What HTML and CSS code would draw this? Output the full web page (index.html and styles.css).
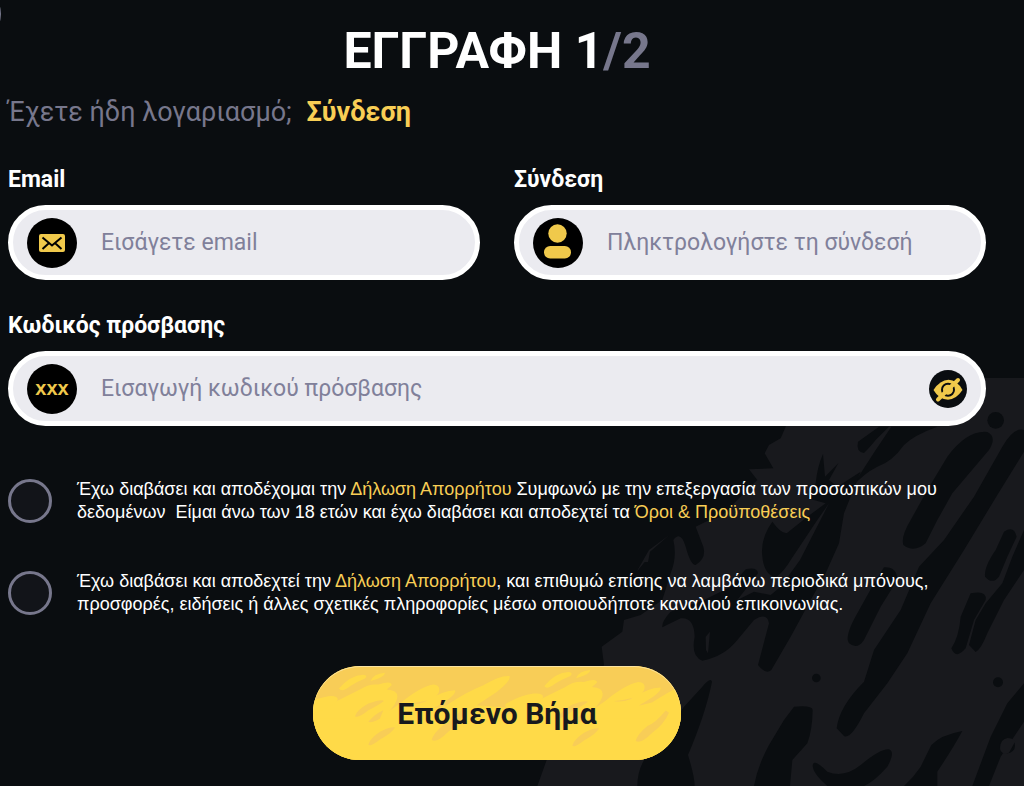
FILE: index.html
```html
<!DOCTYPE html>
<html lang="el">
<head>
    <meta charset="UTF-8">
    <meta name="viewport" content="width=device-width, initial-scale=1.0">
    <title>Εγγραφή</title>
    <link rel="stylesheet" href="styles.css">
</head>
<body>
    <main class="page">
        <svg class="art" viewBox="0 0 1500 1248" aria-hidden="true">
            <path class="art-light" d="M820 24H1500V1248H40L68 1170L160 1000L240 885L233 830L295 785L300 750L350 735L415 690L440 610Q460 560 448 510Q470 480 485 530Q500 585 515 585Q548 565 538 530L515 470L545 455L590 440L640 390L700 330L675 298L748 295L722 250L735 225L770 205L785 170Z"/>
            <path class="art-light" d="M435 496L375 540L338 605L362 576H372L378 545Z"/>
            <g class="art-dark">
                <path d="M1065 170L1002 215Q995 245 1020 249Q1035 235 1055 210L1095 170ZM1102 170L1055 240L1010 310L985 350Q1020 310 1060 290Q1105 275 1140 225Q1170 195 1240 170Z"/>
                <path d="M897 252Q880 290 875 340L850 385L905 400L850 440L790 488Q775 495 745 455Q712 500 714 550Q718 615 755 622Q780 605 800 570L880 450L915 400L828 570L770 650L740 675L690 665L640 690L702 610Q700 590 665 598L620 650L540 690L440 725Q412 755 415 772L470 745Q510 740 512 800Q500 860 535 872Q600 860 640 810L690 750Q730 725 735 760L702 885Q725 915 742 900L800 800L860 690L905 610L945 520L960 430L1010 305L940 350L915 330L943 280L903 320Z"/>
                <path d="M1270 260Q1330 180 1390 186Q1420 200 1395 240L1285 370L1240 450L1205 520Q1170 550 1138 525Q1130 500 1160 450L1210 360Z"/>
                <path d="M1350 380L1435 230Q1470 170 1500 180V245L1420 375L1320 540L1220 700L1150 850L1090 940L1020 1030Q980 1110 960 1098L938 1075Q945 1010 1020 935L1050 840L1130 720L1185 590L1260 510Z"/>
                <path d="M1080 592Q1120 590 1120 630L1070 710L1020 810Q1000 840 975 820Q960 800 1000 730L1050 640Z"/>
                <path d="M1440 485Q1470 465 1478 500L1450 560L1425 620Q1405 645 1383 620Q1380 590 1415 540Z"/>
                <path d="M1500 480L1465 560L1435 640L1385 700L1355 750L1335 825L1355 846Q1370 840 1390 790L1440 690L1500 600Z"/>
                <path d="M1340 670Q1390 660 1385 690L1350 750L1325 835Q1295 870 1282 835Q1305 800 1310 740Z"/>
                <path d="M535 950Q560 920 564 935Q545 1030 492 1155Q512 1220 512 1248H340Q340 1170 410 1110L480 1010Z"/>
                <path d="M810 1010Q865 1005 866 1020Q865 1080 850 1120L805 1170L798 1248H690Q700 1190 735 1125L780 1050Z"/>
                <path d="M866 1185Q870 1165 910 1205Q960 1225 1010 1185Q1070 1135 1095 1138Q1115 1145 1090 1190Q1050 1235 1020 1248H910Q865 1210 866 1185Z"/>
                <path d="M1315 1083Q1290 1130 1240 1205V1248H1140Q1170 1220 1190 1190L1222 1125Q1250 1095 1315 1083Z"/>
                <path d="M1500 940V1055L1430 1160L1395 1248H1345L1400 1100L1450 1000Z"/>
                <circle cx="1415" cy="151" r="25"/>
                <circle cx="877" cy="924" r="13"/>
                <circle cx="1422" cy="937" r="15"/>
                <circle cx="1450" cy="1127" r="23"/>
            </g>
            <path class="art-light" d="M1428 1135Q1428 1108 1450 1104Q1465 1104 1474 1114L1455 1148L1440 1151Q1428 1145 1428 1135ZM545 800L558 785L552 850L546 840Z"/>
        </svg>
        <span class="edge-ring" aria-hidden="true"></span>

        <form class="signup">
            <h1>ΕΓΓΡΑΦΗ 1<span>/2</span></h1>
            <p class="login">Έχετε ήδη λογαριασμό; <a href="#">Σύνδεση</a></p>

            <div class="fields">
                <div class="field">
                    <label for="email">Email</label>
                    <div class="control">
                        <svg class="icon" viewBox="0 0 50 50" aria-hidden="true">
                            <circle cx="25" cy="25" r="25"/>
                            <rect class="gold" x="12" y="16" width="26" height="18" rx="2"/>
                            <path class="line" d="M15.500 19.500L25 27.500L34.500 19.500M15.500 31L21.500 25.500M34.500 31L28.500 25.500"/>
                        </svg>
                        <input type="email" id="email" placeholder="Εισάγετε email">
                    </div>
                </div>
                <div class="field">
                    <label for="login">Σύνδεση</label>
                    <div class="control">
                        <svg class="icon" viewBox="0 0 50 50" aria-hidden="true">
                            <circle cx="25" cy="25" r="25"/>
                            <circle class="gold" cx="24.500" cy="15.500" r="9.200"/>
                            <rect class="gold" x="11" y="28" width="27" height="12.500" rx="6.200"/>
                        </svg>
                        <input type="text" id="login" placeholder="Πληκτρολογήστε τη σύνδεσή">
                    </div>
                </div>
                <div class="field wide">
                    <label for="password">Κωδικός πρόσβασης</label>
                    <div class="control">
                        <span class="icon xxx" aria-hidden="true">xxx</span>
                        <input type="password" id="password" placeholder="Εισαγωγή κωδικού πρόσβασης">
                        <button type="button" class="toggle" aria-label="Εμφάνιση κωδικού">
                            <svg viewBox="0 0 38 38" aria-hidden="true">
                                <path class="gold" d="M4.500 20Q11 10 19.500 9.800Q28 10 33.500 20Q27 29.600 19 29.800Q10 29.500 4.500 20Z"/>
                                <path class="slash" d="M9 29.500L29 10"/>
                                <circle class="ring" cx="19" cy="19.700" r="6"/>
                                <path class="slash" d="M14 24.500L24 14.800"/>
                                <circle class="gold" cx="19" cy="19.700" r="4.500"/>
                            </svg>
                        </button>
                    </div>
                </div>
            </div>

            <div class="consents">
                <div class="consent">
                    <input type="checkbox" id="terms">
                    <label for="terms">Έχω διαβάσει και αποδέχομαι την <a href="#">Δήλωση Απορρήτου</a> Συμφωνώ με την επεξεργασία των προσωπικών μου<br>δεδομένων&nbsp; Είμαι άνω των 18 ετών και έχω διαβάσει και αποδεχτεί τα <a href="#">Όροι &amp; Προϋποθέσεις</a></label>
                </div>
                <div class="consent">
                    <input type="checkbox" id="news">
                    <label for="news">Έχω διαβάσει και αποδεχτεί την <a href="#">Δήλωση Απορρήτου</a>, και επιθυμώ επίσης να λαμβάνω περιοδικά μπόνους,<br>προσφορές, ειδήσεις ή άλλες σχετικές πληροφορίες μέσω οποιουδήποτε καναλιού επικοινωνίας.</label>
                </div>
            </div>

            <button type="submit" class="next">
                <svg viewBox="39 47 1104 283" preserveAspectRatio="none" aria-hidden="true">
                    <defs>
                        <g id="strokes">
                            <path d="M0 205L60 178L180 118Q205 100 235 103Q275 90 275 105L260 118Q300 120 290 150Q280 180 235 205L300 160Q360 110 400 103Q425 105 415 130Q395 155 325 160Q350 165 375 155Q430 120 465 120Q470 130 440 150L400 175L440 165Q500 125 550 105Q600 75 628 77Q635 90 590 125L530 165L616 172V340H0Z"/>
                            <path d="M0 170Q40 145 85 138Q115 135 113 150Q100 170 40 190H0Z"/>
                            <path d="M117 115Q150 75 190 73Q205 75 195 85Q170 95 150 108Q125 128 117 115ZM212 92Q220 70 255 67Q255 80 212 92Z"/>
                        </g>
                        <g id="scratches">
                            <path d="M165 198Q170 180 205 160Q245 145 252 152Q235 165 205 180Q175 205 165 198ZM205 215Q225 190 250 180L240 205Q215 220 205 215ZM205 283Q210 265 240 245Q270 230 285 232Q275 250 240 268Q210 292 205 283ZM395 270Q400 250 430 225Q455 215 485 178L495 185Q480 220 445 245Q410 280 395 270Z"/>
                        </g>
                    </defs>
                    <rect class="btn-top" x="39" y="47" width="1104" height="283"/>
                    <g class="btn-base">
                        <use href="#strokes"/>
                        <use href="#strokes" x="616" y="-8"/>
                        <rect x="39" y="205" width="1104" height="125"/>
                    </g>
                    <g class="btn-top">
                        <use href="#scratches"/>
                        <use href="#scratches" x="612" y="3"/>
                    </g>
                </svg>
                <span>Επόμενο Βήμα</span>
            </button>
        </form>
    </main>
</body>
</html>
```
FILE: styles.css
```css
* {
    margin: 0;
    padding: 0;
    box-sizing: border-box;
}

body {
    background: #0a0d10;
    color: #fff;
    font-family: Roboto, "Liberation Sans", sans-serif;
}

a {
    color: #f8ce55;
    text-decoration: none;
}

.page {
    position: relative;
    min-height: 100vh;
    padding: 20px 38px 26px 8px;
    overflow: hidden;
}

/* Background drawing */
.art {
    position: absolute;
    right: 0;
    bottom: 0;
    width: 500px;
}

.art-light {
    fill: #18191d;
}

.art-dark {
    fill: #0a0d10;
}

.edge-ring {
    position: absolute;
    top: -16px;
    left: -59px;
    width: 60px;
    height: 60px;
    border: 1px solid #77788c;
    border-radius: 50%;
}

.signup {
    position: relative;
    display: flex;
    flex-direction: column;
}

h1 {
    font-size: 50px;
    line-height: 62px;
    font-weight: 700;
    text-align: center;
}

h1 span {
    color: #77778c;
}

.login {
    margin-top: 14px;
    font-size: 27px;
    line-height: 32px;
    color: #77778c;
}

.login a {
    margin-left: 8px;
    font-weight: 700;
}

/* Fields */
.fields {
    display: grid;
    grid-template-columns: 1fr 1fr;
    gap: 30px 34px;
    margin-top: 36px;
}

.wide {
    grid-column: 1 / -1;
}

.field label {
    display: block;
    margin-bottom: 10px;
    font-size: 23px;
    line-height: 31px;
    font-weight: 700;
}

.control {
    display: flex;
    align-items: center;
    height: 75px;
    padding: 0 14px;
    background: #ebebf0;
    border: 5px solid #fff;
    border-radius: 38px;
}

.icon {
    flex: none;
    width: 50px;
    height: 50px;
}

.gold {
    fill: #f0c94b;
}

.line {
    fill: none;
    stroke: #000;
    stroke-width: 2;
}

.xxx {
    border-radius: 50%;
    background: #000;
    color: #f0c94b;
    font-family: "Liberation Sans", sans-serif;
    font-size: 20px;
    line-height: 48px;
    font-weight: 700;
    text-align: center;
}

.control input {
    flex: 1;
    min-width: 0;
    height: 50px;
    margin: 0 16px 0 24px;
    background: none;
    border: 0;
    outline: 0;
    color: #18191d;
    font-family: inherit;
    font-size: 23px;
}

.control input::placeholder {
    color: #80809a;
    opacity: 1;
}

.toggle {
    width: 38px;
    height: 38px;
    background: #0a0d10;
    border: 0;
    border-radius: 50%;
}

.toggle svg {
    display: block;
}

.ring {
    fill: none;
    stroke: #0a0d10;
    stroke-width: 2;
}

.slash {
    stroke: #f0c94b;
    stroke-width: 4;
    stroke-linecap: round;
}

/* Consents */
.consents {
    display: flex;
    flex-direction: column;
    gap: 46px;
    margin-top: 52px;
}

.consent {
    display: flex;
    align-items: center;
    gap: 25px;
}

.consent input {
    flex: none;
    width: 44px;
    height: 44px;
    appearance: none;
    background: #121419;
    border: 3px solid #77778c;
    border-radius: 50%;
}

.consent input:checked {
    background: #ffda48;
}

.consent label {
    font-family: "Liberation Sans", sans-serif;
    font-size: 18px;
    line-height: 23px;
    white-space: nowrap;
}

/* Submit */
.next {
    position: relative;
    align-self: center;
    width: 368px;
    height: 94px;
    margin-top: 50px;
    background: #ffda48;
    border: 0;
    border-radius: 47px;
    overflow: hidden;
    color: #18191d;
    font-family: inherit;
    font-size: 30px;
    font-weight: 700;
    cursor: pointer;
}

.next::after {
    content: '';
    position: absolute;
    inset: 0;
    border-radius: 47px;
    box-shadow: inset 0 1px 0 #fbe3a0;
}

.next svg {
    position: absolute;
    inset: 0;
    width: 100%;
    height: 100%;
}

.next span {
    position: relative;
}

.btn-top {
    fill: #f8cd57;
}

.btn-base {
    fill: #ffda48;
}

@media (max-width: 960px) {
    .consent label {
        white-space: normal;
    }
}

@media (max-width: 640px) {
    .fields {
        grid-template-columns: 1fr;
    }

    .next {
        width: 100%;
    }
}
```
